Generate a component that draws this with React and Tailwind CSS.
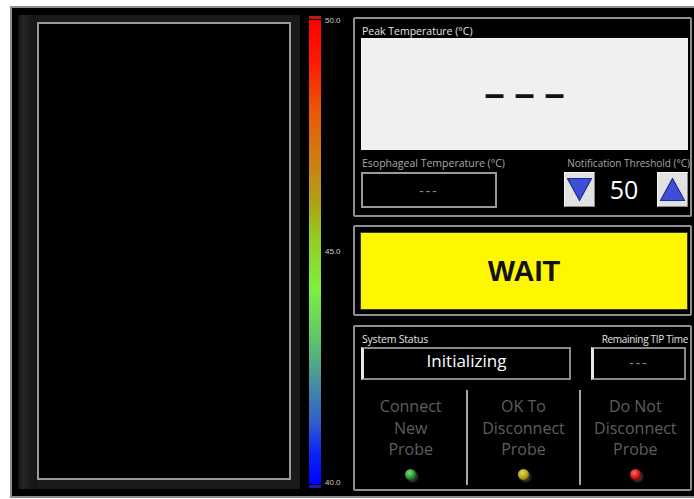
import React from 'react'

const Led = ({ color }) => {
  const fills = {
    green: 'bg-[radial-gradient(circle_at_40%_35%,#7ee07e,#2a8a2a_55%,#0f400f)]',
    yellow: 'bg-[radial-gradient(circle_at_40%_35%,#e6dc5a,#a89a14_55%,#4a4206)]',
    red: 'bg-[radial-gradient(circle_at_40%_35%,#ff6a6a,#c41010_55%,#500404)]'
  }
  return (
    <div className={`w-[11px] h-[11px] rounded-full shadow-[2px_2px_2px_rgba(60,60,60,0.9)] ${fills[color]}`} />
  )
}

const Arrow = ({ up }) => (
  <svg width="27" height="25" viewBox="0 0 27 25">
    <polygon
      points={up ? '13.5,1.5 25.5,23.5 1.5,23.5' : '1.5,1.5 25.5,1.5 13.5,23.5'}
      fill="#3d4ed8"
      stroke="#1f2c8c"
      strokeWidth="1.2"
      strokeLinejoin="round"
    />
  </svg>
)

const StepButton = ({ up }) => (
  <div className="w-[31px] h-[35px] flex items-center justify-center bg-[#e2e2e2] border border-t-[#f6f6f6] border-l-[#f6f6f6] border-r-[#8a8a8a] border-b-[#8a8a8a]">
    <Arrow up={up} />
  </div>
)

const ProbeColumn = ({ lines, led, className }) => (
  <div className={`flex flex-col items-center pt-[6px] ${className}`}>
    {lines.map((l) => (
      <div key={l} className="text-[16px] leading-[21.5px] text-[#5e5e5e]">{l}</div>
    ))}
    <div className="mt-[8px]">
      <Led color={led} />
    </div>
  </div>
)

export default function App() {
  return (
    <div className="w-[694px] h-[499px] bg-white overflow-hidden font-['Open_Sans',sans-serif]">
      <div className="ml-[10px] mt-[6px] w-[690px] h-[492px] bg-black border-2 border-[#8e8e8e] flex items-start">
        {/* image pane */}
        <div className="ml-[6px] mt-[7px] w-[282px] h-[474px] bg-[linear-gradient(90deg,#121212_0px,#262626_5px,#1a1a1a_12px,#141414_19px,#1a1a1a_20px)] pl-[19px] pr-[9px] pt-[7px] pb-[9px]">
          <div className="w-full h-full bg-black border-2 border-[#9a9a9a]" />
        </div>

        {/* colour scale */}
        <div className="ml-[9px] mt-[8px] w-[12px] h-[472px] flex flex-col">
          <div className="h-[3px] bg-[#c41818]" />
          <div className="h-[1px] bg-black" />
          <div className="flex-1 bg-[linear-gradient(180deg,#ff0000_0%,#ff1a00_9%,#e85a0c_20%,#d07a12_29%,#b0a018_39%,#94cc22_47%,#7cf040_58%,#5ec46a_69%,#4890a0_78%,#2e5ccc_87%,#0e26f4_93%,#0000ff_100%)]" />
          <div className="h-[1px] bg-black" />
          <div className="h-[3px] bg-[#1a1ab4]" />
        </div>
        <div className="ml-[4px] mt-[8px] w-[24px] h-[472px] flex flex-col justify-between text-[8px] leading-[10px] text-[#cfcfcf] font-['Liberation_Sans',sans-serif]">
          <div>50.0</div>
          <div>45.0</div>
          <div>40.0</div>
        </div>

        {/* readouts */}
        <div className="ml-[4px] mt-[9px] w-[339px] flex flex-col">
          <div className="h-[200px] border-2 border-[#8e8e8e] rounded-[2px] pl-[6px] pr-[2px] pt-[6px]">
            <div className="pl-[1px] text-[10.5px] leading-[12px] text-[#e4e4e4]">Peak Temperature (°C)</div>
            <div className="mt-[1px] w-[327px] h-[112px] bg-[#f0f0f0] flex items-center justify-center">
              <span className="font-['Liberation_Sans',sans-serif] font-bold text-[36px] leading-none text-[#111]">– – –</span>
            </div>
            <div className="mt-[7px] flex justify-between">
              <div className="flex flex-col">
                <div className="pl-[1px] text-[10.5px] leading-[12px] text-[#a8a8a8]">Esophageal Temperature (°C)</div>
                <div className="mt-[3px] w-[136px] h-[36px] border-2 border-[#9a9a9a] flex items-center justify-center text-[14px] tracking-[2px] text-[#8a8a8a]">
                  ---
                </div>
              </div>
              <div className="flex flex-col items-end">
                <div className="text-[10px] leading-[12px] text-[#a8a8a8] -mr-[2px]">Notification Threshold (°C)</div>
                <div className="mt-[3px] flex items-center gap-[1px]">
                  <StepButton />
                  <div className="w-[60px] h-[35px] bg-black flex items-center justify-center pr-[4px] text-[25px] leading-none text-white">50</div>
                  <StepButton up />
                </div>
              </div>
            </div>
          </div>

          <div className="mt-[8px] h-[91px] border-2 border-[#8e8e8e] rounded-[2px] pl-[5px] pt-[5px]">
            <div className="w-[328px] h-[78px] bg-[#fff700] border border-[#3a3a3a] flex items-center justify-center">
              <span className="font-['Liberation_Sans',sans-serif] font-bold text-[29px] leading-none text-[#111]">WAIT</span>
            </div>
          </div>

          <div className="mt-[9px] h-[166px] border-2 border-[#8e8e8e] rounded-[2px] pl-[6px] pt-[6px]">
            <div className="flex">
              <div className="flex flex-col">
                <div className="pl-[1px] text-[10.5px] leading-[12px] text-[#e4e4e4] tracking-[-0.2px]">System Status</div>
                <div className="mt-[2px] w-[210px] h-[33px] border-2 border-[#8a8a8a] border-l-[3px] border-l-[#e8e8e8] flex items-center justify-center pb-[5px] text-[17px] text-white">
                  Initializing
                </div>
              </div>
              <div className="ml-[20px] flex flex-col items-end">
                <div className="text-[10px] leading-[12px] text-[#e4e4e4] tracking-[-0.3px] -mr-[2px]">Remaining TIP Time</div>
                <div className="mt-[2px] w-[95px] h-[33px] border-2 border-[#8a8a8a] border-l-[3px] border-l-[#e8e8e8] flex items-center justify-center pb-[3px] text-[14px] tracking-[2px] text-[#8a8a8a]">
                  ---
                </div>
              </div>
            </div>
            <div className="mt-[10px] -ml-[6px] flex h-[95px]">
              <ProbeColumn className="w-[112px]" lines={['Connect', 'New', 'Probe']} led="green" />
              <div className="w-[2px] h-full bg-[#a6a6a6]" />
              <ProbeColumn className="w-[111px]" lines={['OK To', 'Disconnect', 'Probe']} led="yellow" />
              <div className="w-[2px] h-full bg-[#a6a6a6]" />
              <ProbeColumn className="w-[110px]" lines={['Do Not', 'Disconnect', 'Probe']} led="red" />
            </div>
          </div>
        </div>
      </div>
    </div>
  )
}
